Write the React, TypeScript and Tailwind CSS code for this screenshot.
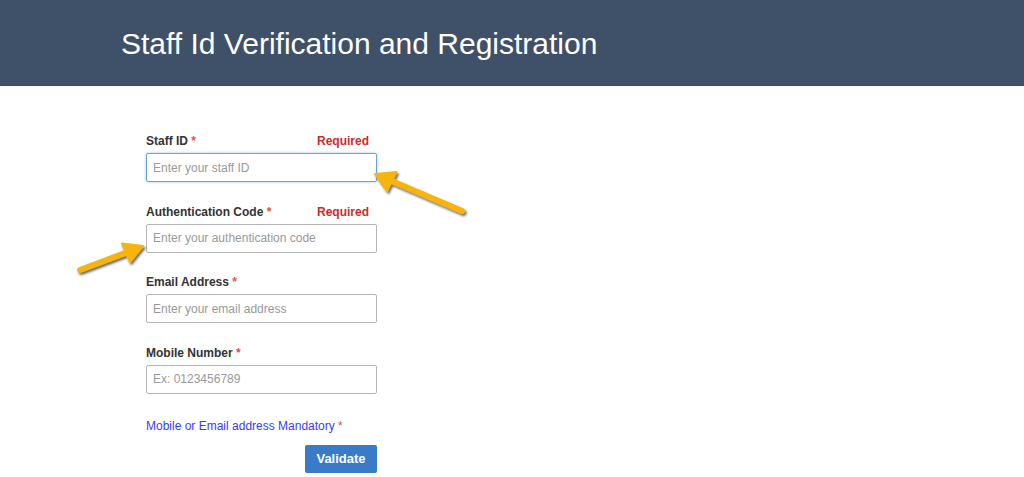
import React from 'react';

type Field = {
  label: string;
  placeholder: string;
  required?: boolean;
  focused?: boolean;
};

const fields: Field[] = [
  { label: 'Staff ID', placeholder: 'Enter your staff ID', required: true, focused: true },
  { label: 'Authentication Code', placeholder: 'Enter your authentication code', required: true },
  { label: 'Email Address', placeholder: 'Enter your email address' },
  { label: 'Mobile Number', placeholder: 'Ex: 0123456789' },
];

function Arrows() {
  return (
    <svg className="pointer-events-none absolute left-0 top-0" width="1024" height="477" viewBox="0 0 1024 477">
      <defs>
        <filter id="sh" x="-20%" y="-20%" width="140%" height="140%">
          <feDropShadow dx="1.5" dy="2" stdDeviation="1.2" floodColor="#3a3a3a" floodOpacity="0.75" />
        </filter>
      </defs>
      <g filter="url(#sh)" fill="#f6b40c" stroke="#f6b40c" strokeLinecap="round" strokeLinejoin="round">
        {/* staff id arrow */}
        <line x1="462" y1="211" x2="391.5" y2="181.1" strokeWidth="6" />
        <polygon points="375,174 396.5,172 387,191" strokeWidth="2" />
        {/* auth code arrow */}
        <line x1="80" y1="270" x2="126.2" y2="252.6" strokeWidth="6" />
        <polygon points="143,246 130,262 122,243.5" strokeWidth="2" />
      </g>
    </svg>
  );
}

export default function App() {
  return (
    <div className="relative h-[477px] w-[1024px] overflow-hidden bg-white font-['Liberation_Sans',Arial,sans-serif]">
      <header className="flex h-[86px] items-center bg-[#3f5069] pl-[121px]">
        <h1 className="pt-[2px] text-[30px] leading-none text-white">Staff Id Verification and Registration</h1>
      </header>

      <form className="ml-[146px] w-[231px] pt-[47px]" onSubmit={(e) => e.preventDefault()}>
        {fields.map((f) => (
          <div key={f.label} className="mb-[21.5px]">
            <div className="mb-[3px] flex h-[17px] items-center justify-between pr-2 text-[12px] font-bold leading-[17px]">
              <span className="text-[#333]">
                {f.label} <span className="text-[#d9534f]">*</span>
              </span>
              {f.required && <span className="text-[#cc2a2a]">Required</span>}
            </div>
            <input
              placeholder={f.placeholder}
              className={`h-[29px] w-full rounded-[2px] border px-[6px] text-[12px] text-[#555] outline-none placeholder:text-[#999] ${
                f.focused
                  ? 'border-[#66a3e0] shadow-[0_0_3px_rgba(102,163,224,0.6)]'
                  : 'border-[#b5b5b5]'
              }`}
            />
          </div>
        ))}

        <p className="mt-[24px] text-[12px] leading-[17px] text-[#3b3bf5]">
          Mobile or Email address Mandatory <span className="text-[#d9534f]">*</span>
        </p>

        <div className="mt-[10px] flex justify-end">
          <button
            type="submit"
            className="h-[28px] w-[72px] rounded-[2px] bg-[#3a7bc8] text-[13px] font-bold text-white"
          >
            Validate
          </button>
        </div>
      </form>

      <Arrows />
    </div>
  );
}
